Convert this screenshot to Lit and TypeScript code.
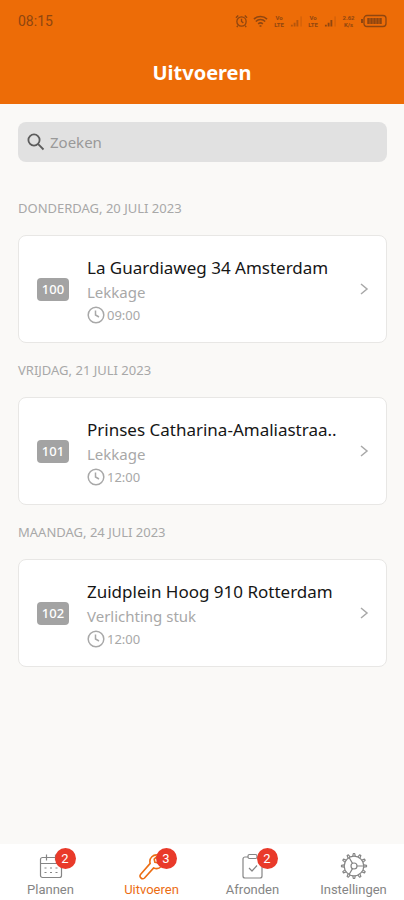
import { LitElement, html, css, svg } from "lit";
import { customElement, property } from "lit/decorators.js";
import { classMap } from "lit/directives/class-map.js";

interface Job {
  day: string;
  number: string;
  title: string;
  subject: string;
  time: string;
}

const jobs: Job[] = [
  { day: "DONDERDAG, 20 JULI 2023", number: "100", title: "La Guardiaweg 34 Amsterdam", subject: "Lekkage", time: "09:00" },
  { day: "VRIJDAG, 21 JULI 2023", number: "101", title: "Prinses Catharina-Amaliastraa..", subject: "Lekkage", time: "12:00" },
  { day: "MAANDAG, 24 JULI 2023", number: "102", title: "Zuidplein Hoog 910 Rotterdam", subject: "Verlichting stuk", time: "12:00" },
];

const calendarIcon = svg`
  <rect x="3.500" y="5.500" width="21" height="20" rx="2"/>
  <path d="M3.500 11.500h21M9.500 2.500v6M18.500 2.500v6"/>
  <path d="M7.500 16h2M13 16h2M18.500 16h2M7.500 20.500h2M13 20.500h2M18.500 20.500h2"/>`;

const wrenchIcon = svg`
  <path d="M20.500 3.200A6.600 6.600 0 0 0 12.200 11.400L2.700 22.200A2.700 2.700 0 0 0 6.500 26L15.700 15.900A6.600 6.600 0 0 0 24.400 7L20.500 10.900L16.900 10.300L16.200 7.200Z"/>`;

const clipboardIcon = svg`
  <path d="M9 5H6a2 2 0 0 0-2 2v17a2 2 0 0 0 2 2h15a2 2 0 0 0 2-2V7a2 2 0 0 0-2-2H18"/>
  <rect x="9" y="2.500" width="9" height="4" rx="1.500"/>
  <path d="M10 16l3 3 5-5.500"/>`;

const teeth = Array.from({ length: 12 }, (_, i) => i * 30);
const gearIcon = svg`
  <circle cx="14" cy="14" r="9.800"/>
  <circle cx="14" cy="14" r="3"/>
  <path d="M17 14h6.800M12.500 11.400L9.100 5.500M12.500 16.600l-3.400 5.900"/>
  ${teeth.map((a) => svg`<path d="M12.800 4.200L13.300 1.500h1.400L15.200 4.200" transform="rotate(${a} 14 14)"/>`)}`;

const tabs = [
  { label: "Plannen", icon: calendarIcon, count: 2, active: false },
  { label: "Uitvoeren", icon: wrenchIcon, count: 3, active: true },
  { label: "Afronden", icon: clipboardIcon, count: 2, active: false },
  { label: "Instellingen", icon: gearIcon, count: 0, active: false },
];

@customElement("status-bar")
export class StatusBar extends LitElement {
  static styles = css`
    :host {
      display: flex;
      justify-content: space-between;
      align-items: center;
      height: 42px;
      padding: 0 17px 0 18px;
      color: #8f4610;
      font: 14px/16px Roboto, sans-serif;
    }
    .indicators {
      display: flex;
      align-items: center;
      gap: 5px;
    }
    .stack {
      display: flex;
      flex-direction: column;
      align-items: center;
      width: 12px;
      font-size: 6px;
      line-height: 7px;
      font-weight: 700;
    }
    .speed {
      width: 15px;
    }
    svg {
      display: block;
      fill: none;
      stroke: currentColor;
    }
  `;

  private signal(bars: number) {
    return html`<svg width="12" height="14" viewBox="0 0 13 14" stroke-width="2" aria-hidden="true">
      <path d="M2 13v-2M5 13V9M8 13V6" opacity=${bars > 3 ? 1 : 0.6} />
      <path d="M12 13V2" opacity="0.4" stroke-width="1" />
    </svg>`;
  }

  render() {
    return html`
      <span>08:15</span>
      <div class="indicators">
        <svg width="13" height="14" viewBox="0 0 14 14" stroke-width="1.400" aria-hidden="true">
          <circle cx="7" cy="7.500" r="5" />
          <path d="M7 4.500v3l2 1.500M1 3.500L3.500 1M13 3.500L10.500 1M3 12l-1 1.500M11 12l1 1.500" />
        </svg>
        <svg width="15" height="14" viewBox="0 0 16 14" stroke-width="1.600" aria-hidden="true">
          <path d="M1 5a10 10 0 0 1 14 0M3 7.500a7 7 0 0 1 10 0M5.500 10a4 4 0 0 1 5 0M7 12.200h2" />
        </svg>
        <span class="stack"><span>Vo</span><span>LTE</span></span>
        ${this.signal(3)}
        <span class="stack"><span>Vo</span><span>LTE</span></span>
        ${this.signal(4)}
        <span class="stack speed"><span>2.62</span><span>K/s</span></span>
        <svg width="26" height="14" viewBox="0 0 26 14" stroke-width="1.300" aria-hidden="true">
          <rect x="3" y="1.500" width="22" height="11" rx="3" />
          <path d="M1 5v4" stroke-width="2" />
          <path d="M7.500 4v6M10.500 4v6M13.500 4v6M16.500 4v6M19.500 4v6" stroke-width="2.500" />
        </svg>
      </div>
    `;
  }
}

@customElement("job-card")
export class JobCard extends LitElement {
  @property({ attribute: false }) job!: Job;

  static styles = css`
    :host {
      display: block;
    }
    .card {
      box-sizing: border-box;
      display: flex;
      align-items: center;
      width: 100%;
      min-height: 108px;
      padding: 16px 16px 16px 18px;
      border: 1px solid #e8e7e5;
      border-radius: 8px;
      background: #fff;
      color: #a8a8a8;
      font: 15px/24px "Noto Sans", sans-serif;
      text-align: left;
    }
    .number {
      flex: none;
      width: 32px;
      margin-right: 18px;
      border-radius: 4px;
      background: #a3a3a3;
      color: #fff;
      font-size: 13px;
      font-weight: 500;
      line-height: 23px;
      text-align: center;
    }
    .details {
      flex: 1;
      min-width: 0;
      display: flex;
      flex-direction: column;
      padding-top: 4px;
    }
    .title {
      color: #161616;
      font-size: 17px;
      white-space: nowrap;
      overflow: hidden;
    }
    .time {
      display: flex;
      align-items: center;
      gap: 2px;
      font-size: 13px;
      line-height: 22px;
    }
    svg {
      flex: none;
      fill: none;
      stroke: currentColor;
      stroke-width: 1.5;
    }
  `;

  render() {
    return html`
      <button class="card" type="button">
        <span class="number">${this.job.number}</span>
        <span class="details">
          <span class="title">${this.job.title}</span>
          <span>${this.job.subject}</span>
          <span class="time">
            <svg width="18" height="18" viewBox="0 0 18 18" aria-hidden="true">
              <circle cx="9" cy="9" r="7.800" />
              <path d="M8.500 4.500V9l3.500 2" />
            </svg>
            ${this.job.time}
          </span>
        </span>
        <svg width="12" height="14" viewBox="0 0 12 14" aria-hidden="true">
          <path d="M3 2l6 5-6 5" />
        </svg>
      </button>
    `;
  }
}

@customElement("tab-bar")
export class TabBar extends LitElement {
  static styles = css`
    nav {
      display: grid;
      grid-template-columns: repeat(4, 1fr);
      padding-top: 8px;
      background: #fff;
    }
    a {
      display: flex;
      flex-direction: column;
      align-items: center;
      color: #858585;
      font: 13px/20px Roboto, sans-serif;
      text-decoration: none;
    }
    .active {
      color: #ec6d13;
    }
    .icon {
      position: relative;
      height: 28px;
    }
    svg {
      display: block;
      fill: none;
      stroke: currentColor;
      stroke-width: 1.2;
      stroke-linejoin: round;
    }
    .active svg {
      stroke-width: 1.6;
    }
    .badge {
      position: absolute;
      top: -4px;
      left: 18px;
      width: 21px;
      border-radius: 50%;
      background: #e93a2a;
      color: #fff;
      font-size: 13px;
      line-height: 21px;
      text-align: center;
    }
  `;

  render() {
    return html`
      <nav>
        ${tabs.map(
          (tab) => html`
            <a href="#" class=${classMap({ active: tab.active })} aria-current=${tab.active ? "page" : "false"}>
              <span class="icon">
                <svg width="28" height="28" viewBox="0 0 28 28" aria-hidden="true">${tab.icon}</svg>
                ${tab.count ? html`<span class="badge">${tab.count}</span>` : ""}
              </span>
              <span>${tab.label}</span>
            </a>
          `
        )}
      </nav>
    `;
  }
}

@customElement("app-root")
export class AppRoot extends LitElement {
  static styles = css`
    :host {
      display: flex;
      flex-direction: column;
      min-height: 100vh;
      background: #faf9f7;
      font-family: "Noto Sans", sans-serif;
    }
    header {
      background: #ed6c07;
    }
    h1 {
      margin: 0;
      padding: 16px 0;
      color: #fff;
      font-size: 20px;
      line-height: 30px;
      font-weight: 700;
      text-align: center;
    }
    main {
      flex: 1;
      padding: 18px 17px 18px 18px;
    }
    .search {
      display: flex;
      align-items: center;
      gap: 5px;
      height: 40px;
      padding: 0 9px;
      margin-bottom: 36px;
      border-radius: 8px;
      background: #e1e1e1;
      color: #5c5c5c;
    }
    .search svg {
      flex: none;
      fill: none;
      stroke: currentColor;
      stroke-width: 1.8;
    }
    input {
      flex: 1;
      min-width: 0;
      padding: 0;
      border: 0;
      outline: 0;
      background: none;
      color: #333;
      font: 15px/24px "Noto Sans", sans-serif;
    }
    input::placeholder {
      color: #999;
      opacity: 1;
    }
    h2 {
      margin: 0;
      padding-bottom: 17px;
      color: #a8a8a8;
      font-size: 13px;
      line-height: 20px;
      font-weight: 400;
    }
    section {
      margin-bottom: 17px;
    }
  `;

  render() {
    return html`
      <header>
        <status-bar></status-bar>
        <h1>Uitvoeren</h1>
      </header>
      <main>
        <label class="search">
          <svg width="18" height="18" viewBox="0 0 18 18" aria-hidden="true">
            <circle cx="7" cy="7" r="5.600" />
            <path d="M11.200 11.200l5.300 5.300" />
          </svg>
          <input type="search" placeholder="Zoeken" aria-label="Zoeken" />
        </label>
        ${jobs.map(
          (job) => html`
            <section>
              <h2>${job.day}</h2>
              <job-card .job=${job}></job-card>
            </section>
          `
        )}
      </main>
      <tab-bar></tab-bar>
    `;
  }
}
